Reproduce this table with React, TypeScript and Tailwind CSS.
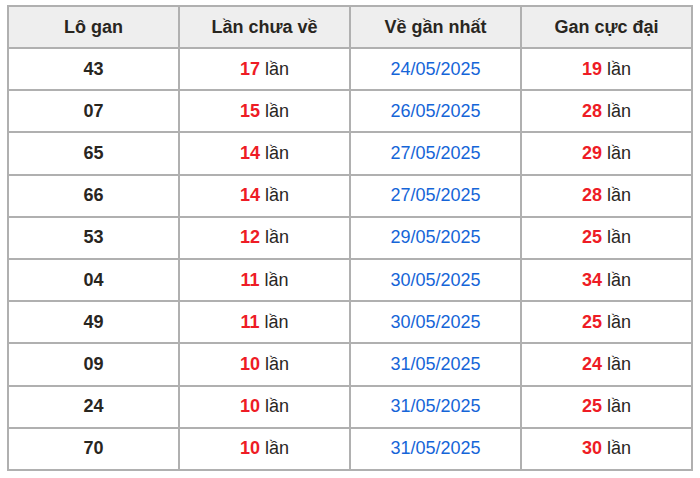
import React from 'react';

const rows = [
  { lo: '43', lan: 17, date: '24/05/2025', max: 19 },
  { lo: '07', lan: 15, date: '26/05/2025', max: 28 },
  { lo: '65', lan: 14, date: '27/05/2025', max: 29 },
  { lo: '66', lan: 14, date: '27/05/2025', max: 28 },
  { lo: '53', lan: 12, date: '29/05/2025', max: 25 },
  { lo: '04', lan: 11, date: '30/05/2025', max: 34 },
  { lo: '49', lan: 11, date: '30/05/2025', max: 25 },
  { lo: '09', lan: 10, date: '31/05/2025', max: 24 },
  { lo: '24', lan: 10, date: '31/05/2025', max: 25 },
  { lo: '70', lan: 10, date: '31/05/2025', max: 30 },
];

export default function App() {
  return (
    <div className="w-[700px] h-[478px] bg-white pt-[5px] pl-[7px] font-['Liberation_Sans',Arial,sans-serif] text-[18px] text-[#29261f]">
      <table className="w-[686px] table-fixed border-collapse">
        <thead>
          <tr className="h-[42px] bg-[#eeeeee]">
            {['Lô gan', 'Lần chưa về', 'Về gần nhất', 'Gan cực đại'].map((h) => (
              <th key={h} className="border-2 border-[#b0b0b0] font-bold text-center">
                {h}
              </th>
            ))}
          </tr>
        </thead>
        <tbody>
          {rows.map((r, i) => (
            <tr key={i} className="h-[42.2px]">
              <td className="border-2 border-[#b0b0b0] text-center font-bold">{r.lo}</td>
              <td className="border-2 border-[#b0b0b0] text-center">
                <span className="font-bold text-[#ee1c25]">{r.lan}</span> lần
              </td>
              <td className="border-2 border-[#b0b0b0] text-center text-[#1565d8]">{r.date}</td>
              <td className="border-2 border-[#b0b0b0] text-center">
                <span className="font-bold text-[#ee1c25]">{r.max}</span> lần
              </td>
            </tr>
          ))}
        </tbody>
      </table>
    </div>
  );
}
